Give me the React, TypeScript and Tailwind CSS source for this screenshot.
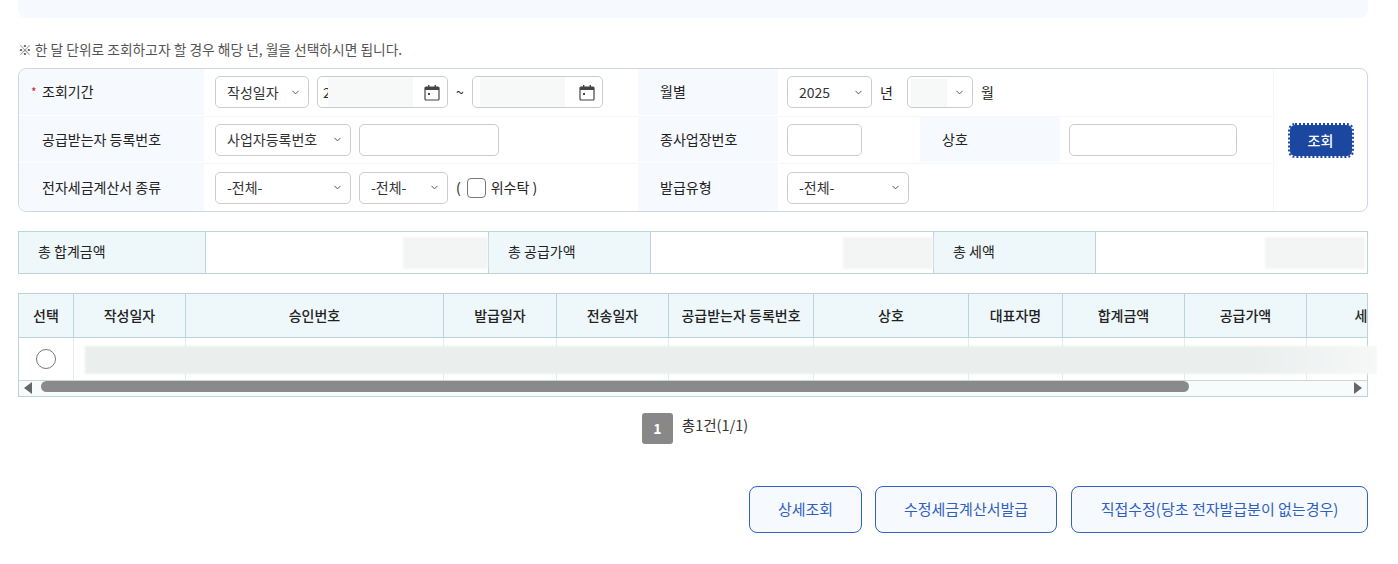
import { ChevronDown } from 'lucide-react'
import type { ReactNode } from 'react'

const columns = [
  { title: '선택', width: 'w-[55px]' },
  { title: '작성일자', width: 'w-[112px]' },
  { title: '승인번호', width: 'w-[258px]' },
  { title: '발급일자', width: 'w-[113px]' },
  { title: '전송일자', width: 'w-[112px]' },
  { title: '공급받는자 등록번호', width: 'w-[145px]' },
  { title: '상호', width: 'w-[155px]' },
  { title: '대표자명', width: 'w-[94px]' },
  { title: '합계금액', width: 'w-[122px]' },
  { title: '공급가액', width: 'w-[122px]' },
  { title: '세액', width: 'w-[122px]' },
]

function CalendarIcon() {
  return (
    <svg width="16" height="17" viewBox="0 0 16 17" fill="none" aria-hidden="true">
      <rect x="1" y="3" width="14" height="13" rx="1" stroke="#444" strokeWidth="1.2" />
      <rect x="1" y="3" width="14" height="3" fill="#444" />
      <rect x="4" y="1" width="1.4" height="3" fill="#444" />
      <rect x="10.6" y="1" width="1.4" height="3" fill="#444" />
      <rect x="4" y="9" width="2" height="2" fill="#444" />
    </svg>
  )
}

function Select({ label, className }: { label: string; className: string }) {
  return (
    <div
      className={`flex h-8 shrink-0 items-center justify-between rounded-[5px] border border-[#c9ccd1] bg-white pr-[7px] pl-[11px] text-[14px] text-[#333] ${className}`}
    >
      <span>{label}</span>
      <ChevronDown size={11} strokeWidth={2} className="text-[#444]" />
    </div>
  )
}

function TextInput({ className }: { className: string }) {
  return <div className={`h-8 shrink-0 rounded-[5px] border border-[#c9ccd1] bg-white ${className}`} />
}

function DateInput({ hasDigit }: { hasDigit?: boolean }) {
  return (
    <div className="relative flex h-8 w-[131px] shrink-0 items-center justify-end overflow-hidden rounded-[5px] border border-[#c9ccd1] bg-white pr-[7px] text-[14px]">
      {hasDigit && <span className="absolute left-[5px] text-[#333]">2</span>}
      <div
        className={`absolute top-0 h-full w-[85px] bg-[#f7f8f8] ${hasDigit ? 'left-[10px]' : 'left-[7px]'}`}
      />
      <CalendarIcon />
    </div>
  )
}

function Label({ children, required, wide }: { children: ReactNode; required?: boolean; wide?: boolean }) {
  return (
    <div
      className={`flex h-full shrink-0 items-center border-b border-white bg-[#f6f9fe] text-[14px] text-[#222] ${wide ? 'w-[185px] pl-[23px]' : 'w-[140px] pl-[22px]'}`}
    >
      {required && <span className="absolute left-[12px] text-[12px] text-[#d8262c]">*</span>}
      {children}
    </div>
  )
}

function Row({ children }: { children: ReactNode }) {
  return <div className="relative flex h-[47.5px] items-center border-b border-[#f5f7fa] last:border-b-0">{children}</div>
}

function Field({ children, className }: { children: ReactNode; className: string }) {
  return <div className={`flex h-full shrink-0 items-center text-[14px] text-[#222] ${className}`}>{children}</div>
}

function SummaryLabel({ children, className }: { children: ReactNode; className: string }) {
  return (
    <div className={`flex h-full shrink-0 items-center border-r border-[#bcd3d8] bg-[#eef7f9] pb-[2px] pl-[19px] text-[14px] text-[#222] ${className}`}>
      {children}
    </div>
  )
}

function SummaryValue({ className, maskClass }: { className: string; maskClass: string }) {
  return (
    <div className={`flex h-full shrink-0 items-center justify-end border-r border-[#bcd3d8] ${className}`}>
      <div className={`h-[32px] bg-[#f3f5f4] blur-[1px] ${maskClass}`} />
    </div>
  )
}

function ActionButton({ children, className }: { children: ReactNode; className: string }) {
  return (
    <button
      type="button"
      className={`flex h-[47px] items-center justify-center rounded-lg border border-[#2f62c4] bg-[#f6f9fe] text-[15px] text-[#2f5fbf] ${className}`}
    >
      {children}
    </button>
  )
}

export default function App() {
  return (
    <div className="h-[564px] w-[1398px] overflow-hidden bg-white pr-[30px] pl-[18px] font-['Noto_Sans_CJK_KR',sans-serif]">
      <div className="h-[18px] rounded-b-lg bg-[#f6f9fe]" />

      <p className="mt-[22px] h-[18px] text-[13.75px] leading-[18px] text-[#555]">
        ※ 한 달 단위로 조회하고자 할 경우 해당 년, 월을 선택하시면 됩니다.
      </p>

      <div className="mt-[10px] flex h-[144px] overflow-hidden rounded-lg border border-[#d0d6e2]">
        <div className="w-[1254px] shrink-0">
          <Row>
            <Label required wide>조회기간</Label>
            <Field className="w-[434px] gap-[8px] pl-[11px]">
              <Select label="작성일자" className="w-[94px]" />
              <DateInput hasDigit />
              <span>~</span>
              <DateInput />
            </Field>
            <Label>월별</Label>
            <Field className="gap-[8px] pl-[9px]">
              <Select label="2025" className="w-[85px]" />
              <span>년</span>
              <div className="relative ml-[6px]">
                <Select label="" className="w-[66px]" />
                <div className="absolute top-[3px] left-[4px] h-[28px] w-[36px] bg-[#f7f8f8]" />
              </div>
              <span>월</span>
            </Field>
          </Row>
          <Row>
            <Label wide>공급받는자 등록번호</Label>
            <Field className="w-[434px] gap-[8px] pl-[11px]">
              <Select label="사업자등록번호" className="w-[136px]" />
              <TextInput className="w-[140px]" />
            </Field>
            <Label>종사업장번호</Label>
            <Field className="w-[142px] pl-[9px]">
              <TextInput className="w-[75px]" />
            </Field>
            <Label>상호</Label>
            <Field className="pl-[9px]">
              <TextInput className="w-[168px]" />
            </Field>
          </Row>
          <Row>
            <Label wide>전자세금계산서 종류</Label>
            <Field className="w-[434px] gap-[8px] pl-[11px]">
              <Select label="-전체-" className="w-[136px]" />
              <Select label="-전체-" className="w-[89px]" />
              <span className="flex items-center gap-[6px]">
                (
                <span className="h-[20px] w-[19px] rounded-[4px] border border-[#777] bg-white" />
                <span className="-ml-[1px]">위수탁 )</span>
              </span>
            </Field>
            <Label>발급유형</Label>
            <Field className="pl-[9px]">
              <Select label="-전체-" className="w-[122px]" />
            </Field>
          </Row>
        </div>
        <div className="flex flex-1 items-center justify-center border-l border-[#f5f7fa]">
          <button
            type="button"
            className="h-[31px] w-[62px] rounded-[5px] bg-[#1c47a0] text-[14px] font-medium text-white outline-2 outline-[#1c47a0] outline-dotted"
          >
            조회
          </button>
        </div>
      </div>

      <div className="mt-[19px] flex h-[43px] border border-[#bcd3d8]">
        <SummaryLabel className="w-[187px]">총 합계금액</SummaryLabel>
        <SummaryValue className="w-[283px]" maskClass="w-[85px]" />
        <SummaryLabel className="w-[162px]">총 공급가액</SummaryLabel>
        <SummaryValue className="w-[283px]" maskClass="w-[90px]" />
        <SummaryLabel className="w-[162px]">총 세액</SummaryLabel>
        <div className="flex h-full flex-1 items-center justify-end pr-[2px]">
          <div className="h-[32px] w-[100px] bg-[#f3f5f4] blur-[1px]" />
        </div>
      </div>

      <div className="relative mt-[19px] h-[104px] border-x border-b border-[#bcd3d8]">
        <div className="h-full overflow-hidden">
          <div className="flex h-[45px] w-[1470px] border-y border-[#bcd3d8] bg-[#eef7f9]">
            {columns.map((column) => (
              <div
                key={column.title}
                className={`flex shrink-0 items-center justify-center border-r border-[#bcd3d8] text-[14px] font-medium text-[#222] ${column.width}`}
              >
                {column.title}
              </div>
            ))}
          </div>
          <div className="flex h-[42px] w-[1470px]">
            {columns.map((column, index) => (
              <div
                key={column.title}
                className={`flex shrink-0 items-center justify-center border-r border-[#e3ecee] ${column.width}`}
              >
                {index === 0 && <span className="size-[20px] rounded-full border border-[#777] bg-white" />}
              </div>
            ))}
          </div>
          <div className="flex h-[16px] items-start border-t border-[#cfd3d3] bg-[#f8fbfb]">
            <span className="mt-[1px] ml-[5px] h-0 w-0 border-y-[6px] border-r-[8px] border-y-transparent border-r-[#666]" />
            <span className="ml-[9px] h-[11px] w-[1148px] rounded-full bg-[#8a8a8a]" />
            <span className="mt-[1px] ml-[165px] h-0 w-0 border-y-[6px] border-l-[8px] border-y-transparent border-l-[#666]" />
          </div>
        </div>
        <div className="absolute top-[53px] left-[66px] h-[28px] w-[1292px] bg-gradient-to-r from-[#eaeeed] from-90% to-[#f6f8f8] blur-[1px]" />
      </div>

      <div className="mt-[16px] flex items-start justify-center gap-[9px] pl-[4px]">
        <div className="flex h-[31px] w-[31px] items-center justify-center rounded-[3px] bg-[#888] text-[14px] font-bold text-white">
          1
        </div>
        <span className="text-[14.5px] leading-[24px] text-[#333]">총1건(1/1)</span>
      </div>

      <div className="mt-[42px] flex justify-end">
        <ActionButton className="w-[113px]">상세조회</ActionButton>
        <ActionButton className="ml-[13px] w-[182px]">수정세금계산서발급</ActionButton>
        <ActionButton className="ml-[14px] w-[297px]">직접수정(당초 전자발급분이 없는경우)</ActionButton>
      </div>
    </div>
  )
}
